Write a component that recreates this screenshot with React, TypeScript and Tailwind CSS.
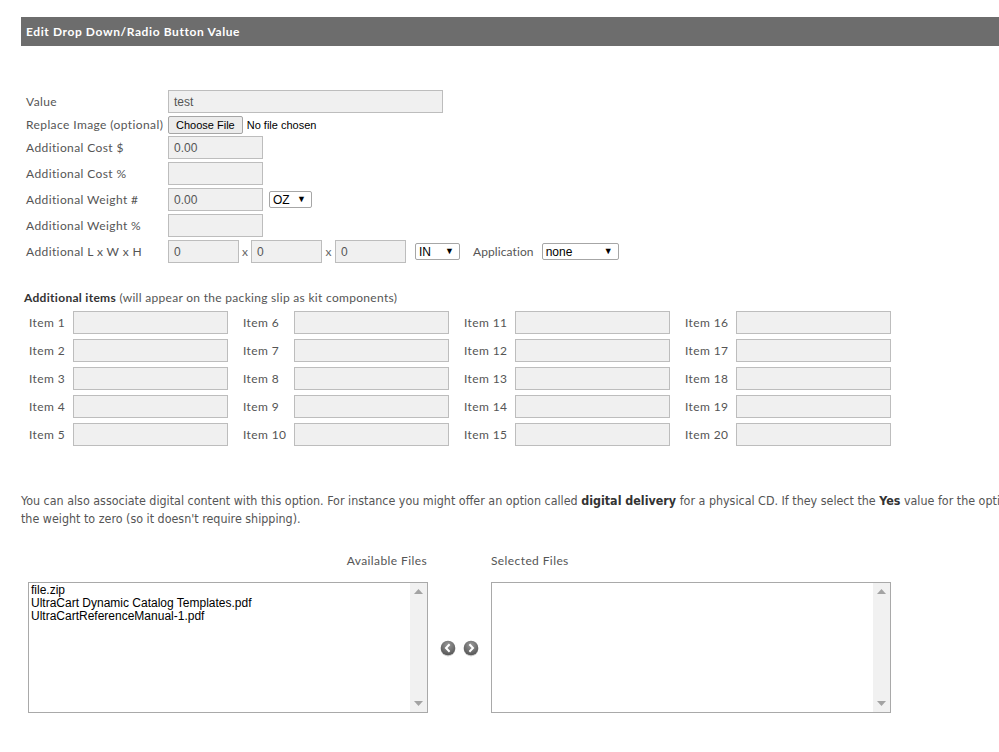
import React from "react";

const lato = { fontFamily: "Lato, 'Open Sans', sans-serif" };

function TextBox({ w, value, className = "" }: { w: string; value?: string; className?: string }) {
  return (
    <div
      className={`${w} h-[23px] border border-[#bdbdbd] bg-[#f0f0f0] flex items-center pl-[5px] text-[12px] text-[#555] ${className}`}
      style={{ fontFamily: "'Liberation Sans', Arial, sans-serif" }}
    >
      {value}
    </div>
  );
}

function Select({ w, value }: { w: string; value: string }) {
  return (
    <div
      className={`${w} h-[17px] border border-[#a6a6a6] rounded-[2px] bg-white flex items-center justify-between pl-[3px] pr-[5px] text-[12px] text-black`}
      style={{ fontFamily: "'Liberation Sans', Arial, sans-serif" }}
    >
      <span>{value}</span>
      <span className="text-[9px]">▼</span>
    </div>
  );
}

function FormRow({ label, children, className = "" }: { label: string; children: React.ReactNode; className?: string }) {
  return (
    <div className={`flex items-center ${className}`}>
      <div className="w-[142px] text-[12px] text-[#555] tracking-[0.4px]" style={lato}>
        {label}
      </div>
      {children}
    </div>
  );
}

function ScrollCol() {
  return (
    <div className="w-[17px] bg-[#f1f1f1] flex flex-col justify-between items-center py-[6px]">
      <svg width="9" height="5" viewBox="0 0 9 5">
        <path d="M0 5 L4.5 0 L9 5 Z" fill="#a3a3a3" />
      </svg>
      <svg width="9" height="5" viewBox="0 0 9 5">
        <path d="M0 0 L4.5 5 L9 0 Z" fill="#a3a3a3" />
      </svg>
    </div>
  );
}

function CircleBtn({ dir }: { dir: "l" | "r" }) {
  const id = `g${dir}`;
  return (
    <svg width="16" height="17" viewBox="0 0 16 17">
      <defs>
        <radialGradient id={id} cx="50%" cy="30%" r="70%">
          <stop offset="0%" stopColor="#9a9a9a" />
          <stop offset="100%" stopColor="#555" />
        </radialGradient>
      </defs>
      <ellipse cx="8" cy="9.2" rx="7.3" ry="7.3" fill="#cfcfcf" />
      <circle cx="8" cy="8" r="7.3" fill={`url(#${id})`} />
      {dir === "l" ? (
        <path d="M9.6 4.3 L6 8 L9.6 11.7" stroke="#fff" strokeWidth="2" fill="none" />
      ) : (
        <path d="M6.4 4.3 L10 8 L6.4 11.7" stroke="#fff" strokeWidth="2" fill="none" />
      )}
    </svg>
  );
}

export default function App() {
  const cols = [
    { start: 1, lw: "w-[44px]", ml: "ml-[29px]" },
    { start: 6, lw: "w-[51px]", ml: "ml-[15px]" },
    { start: 11, lw: "w-[51px]", ml: "ml-[15px]" },
    { start: 16, lw: "w-[51px]", ml: "ml-[15px]" },
  ];
  return (
    <div className="w-[999px] h-[752px] overflow-hidden bg-white relative">
      <div className="w-[1300px] pt-[17px] pl-[21px]">
        {/* Header */}
        <div className="h-[29px] bg-[#6d6d6d] flex items-center pl-[5px] text-white font-bold text-[12px] tracking-[0.6px]" style={lato}>
          Edit Drop Down/Radio Button Value
        </div>

        {/* Form */}
        <div className="pl-[5px] mt-[44px]">
          <FormRow label="Value">
            <TextBox w="w-[275px]" value="test" />
          </FormRow>
          <FormRow label="Replace Image (optional)" className="mt-[3px] h-[18px]">
            <div
              className="h-[18px] px-[7px] border border-[#a6a6a6] rounded-[2px] bg-[#ececec] flex items-center text-[11px] text-black"
              style={{ fontFamily: "'Liberation Sans', Arial, sans-serif" }}
            >
              Choose File
            </div>
            <span className="ml-[4px] text-[11px] text-black" style={{ fontFamily: "'Liberation Sans', Arial, sans-serif" }}>
              No file chosen
            </span>
          </FormRow>
          <FormRow label="Additional Cost $" className="mt-[2px]">
            <TextBox w="w-[95px]" value="0.00" />
          </FormRow>
          <FormRow label="Additional Cost %" className="mt-[3px]">
            <TextBox w="w-[95px]" />
          </FormRow>
          <FormRow label="Additional Weight #" className="mt-[3px]">
            <TextBox w="w-[95px]" value="0.00" />
            <div className="ml-[6px]">
              <Select w="w-[43px]" value="OZ" />
            </div>
          </FormRow>
          <FormRow label="Additional Weight %" className="mt-[3px]">
            <TextBox w="w-[95px]" />
          </FormRow>
          <FormRow label="Additional L x W x H" className="mt-[3px]">
            <TextBox w="w-[71px]" value="0" />
            <span className="w-[12px] text-center text-[12px] text-[#666]" style={lato}>x</span>
            <TextBox w="w-[71px]" value="0" />
            <span className="w-[13px] text-center text-[12px] text-[#666]" style={lato}>x</span>
            <TextBox w="w-[71px]" value="0" />
            <div className="ml-[9px]">
              <Select w="w-[45px]" value="IN" />
            </div>
            <span className="ml-[13px] text-[12px] text-[#555] tracking-[0.1px]" style={lato}>
              Application
            </span>
            <div className="ml-[8px]">
              <Select w="w-[77px]" value="none" />
            </div>
          </FormRow>
        </div>

        {/* Additional items */}
        <div className="mt-[26px] pl-[3px] text-[12px] text-[#555] tracking-[0.3px]" style={lato}>
          <span className="font-bold text-[#333]">Additional items</span> (will appear on the packing slip as kit components)
        </div>
        <div className="mt-[4px] flex flex-col gap-[5px]" style={{ marginLeft: -21 }}>
          {[0, 1, 2, 3, 4].map((r) => (
            <div key={r} className="flex items-center">
              {cols.map((c, ci) => (
                <div key={ci} className={`flex items-center ${c.ml}`}>
                  <div className={`${c.lw} text-[12px] text-[#555] tracking-[0.4px]`} style={lato}>
                    Item {c.start + r}
                  </div>
                  <TextBox w="w-[155px]" />
                </div>
              ))}
            </div>
          ))}
        </div>

        {/* Paragraph */}
        <div
          className="mt-[46px] text-[12.4px] leading-[18px] text-[#555] whitespace-nowrap"
          style={{ fontFamily: "'DejaVu Sans Condensed', 'Liberation Sans Narrow', sans-serif" }}
        >
          You can also associate digital content with this option. For instance you might offer an option called{" "}
          <b className="text-[#333]">digital delivery</b> for a physical CD. If they select the <b className="text-[#333]">Yes</b> value
          for the option you can set
          <br />
          the weight to zero (so it doesn't require shipping).
        </div>

        {/* Files */}
        <div className="mt-[24px] flex" style={{ marginLeft: -21 }}>
          <div className="ml-[28px] w-[400px]">
            <div className="text-right text-[12px] text-[#555] tracking-[0.4px] pr-[1px]" style={lato}>
              Available Files
            </div>
            <div className="mt-[12px] h-[131px] border border-[#a9a9a9] flex bg-white">
              <div
                className="flex-1 pl-[2px] pt-[1px] text-[12px] leading-[13px] text-black"
                style={{ fontFamily: "'Liberation Sans', Arial, sans-serif" }}
              >
                <div>file.zip</div>
                <div>UltraCart Dynamic Catalog Templates.pdf</div>
                <div>UltraCartReferenceManual-1.pdf</div>
              </div>
              <ScrollCol />
            </div>
          </div>
          <div className="w-[63px] flex items-end justify-center gap-[7px] pb-[56px]">
            <CircleBtn dir="l" />
            <CircleBtn dir="r" />
          </div>
          <div className="w-[400px]">
            <div className="text-[12px] text-[#555] tracking-[0.4px]" style={lato}>
              Selected Files
            </div>
            <div className="mt-[12px] h-[131px] border border-[#a9a9a9] flex bg-white">
              <div className="flex-1" />
              <ScrollCol />
            </div>
          </div>
        </div>
      </div>
    </div>
  );
}
